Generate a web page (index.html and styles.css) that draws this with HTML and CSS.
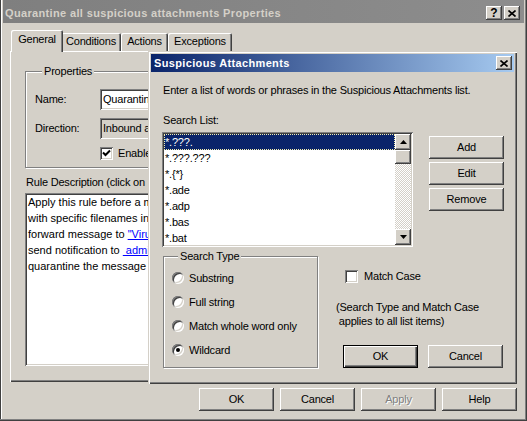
FILE: index.html
```html
<!DOCTYPE html>
<html lang="en">
<head>
    <meta charset="UTF-8">
    <title>Quarantine all suspicious attachments Properties</title>
    <link rel="stylesheet" href="styles.css">
</head>
<body>
<div class="window">
    <div class="titlebar inactive">
        <span class="title">Quarantine all suspicious attachments Properties</span>
        <div class="caption-btns">
            <span class="cbtn help">?</span>
            <span class="cbtn"><svg width="8" height="7" viewBox="0 0 8 7"><path d="M0.5 0.5L7.5 6.5M7.5 0.5L0.5 6.5" stroke="#000" stroke-width="1.6"/></svg></span>
        </div>
    </div>

    <div class="sheet">
        <div class="tabs">
            <span class="tab active w-general">General</span>
            <span class="tab w-conditions">Conditions</span>
            <span class="tab w-actions">Actions</span>
            <span class="tab w-exceptions">Exceptions</span>
        </div>
        <div class="panel">
            <!-- the part of the page not covered by the dialog -->
            <div class="clip">
                <fieldset class="group props">
                    <legend>Properties</legend>
                    <div class="form">
                        <span>Name:</span>
                        <div class="field">Quarantine</div>
                        <span>Direction:</span>
                        <div class="field disabled">Inbound and</div>
                        <span></span>
                        <label class="check-row"><span class="checkbox checked"><svg width="9" height="9" viewBox="0 0 9 9"><path d="M1 3.5L3.5 6L8 1.5" fill="none" stroke="#000" stroke-width="2"/></svg></span>Enabled</label>
                    </div>
                </fieldset>
                <div class="desc-label">Rule Description (click on</div>
                <div class="desc">
                    <div>Apply this rule before a message</div>
                    <div>with specific filenames in</div>
                    <div>forward message to <a href="#">"Virus</a></div>
                    <div>send notification to <a href="#">&nbsp;admin</a></div>
                    <div>quarantine the message</div>
                </div>
            </div>
        </div>
    </div>

    <div class="actions">
        <span class="btn">OK</span>
        <span class="btn">Cancel</span>
        <span class="btn disabled">Apply</span>
        <span class="btn">Help</span>
    </div>

    <div class="dialog">
        <div class="titlebar active">
            <span class="title">Suspicious Attachments</span>
            <span class="cbtn"><svg width="8" height="7" viewBox="0 0 8 7"><path d="M0.5 0.5L7.5 6.5M7.5 0.5L0.5 6.5" stroke="#000" stroke-width="1.6"/></svg></span>
        </div>
        <div class="dlg-body">
            <p class="intro">Enter a list of words or phrases in the Suspicious Attachments list.</p>
            <div class="list-label">Search List:</div>
            <div class="list-row">
                <div class="listbox">
                    <div class="items">
                        <div class="item sel">*.???.</div>
                        <div class="item">*.???.???</div>
                        <div class="item">*.{*}</div>
                        <div class="item">*.ade</div>
                        <div class="item">*.adp</div>
                        <div class="item">*.bas</div>
                        <div class="item">*.bat</div>
                    </div>
                    <div class="vscroll">
                        <span class="sbtn"><svg width="7" height="4" viewBox="0 0 7 4"><path d="M3.5 0L7 4H0z"/></svg></span>
                        <span class="thumb"></span>
                        <span class="track"></span>
                        <span class="sbtn"><svg width="7" height="4" viewBox="0 0 7 4"><path d="M0 0H7L3.5 4z"/></svg></span>
                    </div>
                </div>
                <div class="side-btns">
                    <span class="btn">Add</span>
                    <span class="btn">Edit</span>
                    <span class="btn">Remove</span>
                </div>
            </div>
            <div class="lower">
                <fieldset class="group search-type">
                    <legend>Search Type</legend>
                    <div class="radio-row"><span class="radio"></span>Substring</div>
                    <div class="radio-row"><span class="radio"></span>Full string</div>
                    <div class="radio-row"><span class="radio"></span>Match whole word only</div>
                    <div class="radio-row"><span class="radio on"></span>Wildcard</div>
                </fieldset>
                <div class="lower-right">
                    <label class="check-row match"><span class="checkbox"></span>Match Case</label>
                    <div class="note">(Search Type and Match Case
 applies to all list items)</div>
                    <div class="dlg-actions">
                        <span class="btn default">OK</span>
                        <span class="btn">Cancel</span>
                    </div>
                </div>
            </div>
        </div>
    </div>
</div>
</body>
</html>
```

FILE: styles.css
```css
*{
    box-sizing: border-box;
}
body{
    margin: 0;
    background: #d4d0c8;
    font: 11px/13px "Liberation Sans", Arial, sans-serif;
    letter-spacing: -0.2px;
    color: #000;
}
.window{
    position: relative;
    width: 527px;
    height: 421px;
    padding: 0 3px 3px;
    overflow: hidden;
    background: #d4d0c8;
    box-shadow: inset -1px -1px #404040, inset -2px -2px #808080, inset 1px 0 #404040, inset 2px 0 #fff;
}

/* caption bars */
.titlebar{
    display: flex;
    align-items: center;
    font-weight: bold;
    letter-spacing: 0.35px;
    white-space: nowrap;
}
.titlebar .title{
    flex: 1;
    overflow: hidden;
}
.titlebar.inactive{
    height: 23px;
    padding: 3px 4px 0 2px;
    background: linear-gradient(to right, #7f7f7f, #8d8d8d);
    color: #d4d0c8;
}
.titlebar.active{
    height: 18px;
    padding: 0 2px 0 3px;
    background: linear-gradient(to right, #0a246a, #a6caf0);
    color: #fff;
}
.caption-btns{
    display: flex;
    gap: 2px;
}
.cbtn{
    display: flex;
    align-items: center;
    justify-content: center;
    width: 16px;
    height: 14px;
    background: #d4d0c8;
    color: #000;
    font-size: 12px;
    letter-spacing: 0;
    box-shadow: inset -1px -1px #404040, inset 1px 1px #fff, inset -2px -2px #808080;
}
.cbtn.help{
    padding-top: 1px;
}

/* property sheet */
.sheet{
    margin: 7px 7px 0;
}
.tabs{
    position: relative;
    z-index: 1;
    display: flex;
    align-items: flex-end;
    height: 21px;
    padding-left: 3px;
}
.tab{
    height: 18px;
    padding-top: 2px;
    text-align: center;
    background: #d4d0c8;
    border-radius: 2px 2px 0 0;
    box-shadow: inset 1px 1px #fff, inset -1px 0 #404040, inset -2px 0 #808080;
}
.tab.active{
    position: relative;
    z-index: 2;
    height: 22px;
    margin: 0 -2px -1px;
    padding-top: 3px;
}
.w-general{ width: 48px; }
.tab.active.w-general{ width: 52px; }
.w-conditions{ width: 60px; }
.w-actions{ width: 47px; }
.w-exceptions{ width: 64px; }

.panel{
    height: 331px;
    padding: 14px 0 0 15px;
    box-shadow: inset 1px 1px #fff, inset -1px -1px #404040, inset -2px -2px #808080;
}
.clip{
    width: 124px;
    overflow: hidden;
}

/* etched group boxes */
.group{
    margin: 0;
    min-width: 0;
    border: 1px solid #808080;
    box-shadow: inset 1px 1px #fff, 1px 1px #fff;
}
.group legend{
    margin-left: 6px;
    padding: 0 2px;
    line-height: 13px;
    background: #d4d0c8;
}
.props{
    width: 460px;
    padding: 11px 0 7px 9px;
}
.props legend{
    margin-left: 7px;
}
.form{
    display: grid;
    grid-template-columns: 65px 1fr;
    row-gap: 8px;
    align-items: center;
}
.field{
    height: 21px;
    padding: 4px 3px 0;
    background: #fff;
    white-space: nowrap;
    overflow: hidden;
    box-shadow: inset 1px 1px #808080, inset -1px -1px #fff, inset 2px 2px #404040, inset -2px -2px #d4d0c8;
}
.field.disabled{
    background: #d4d0c8;
}
.check-row{
    display: flex;
    align-items: center;
    height: 13px;
    white-space: nowrap;
}
.checkbox{
    display: flex;
    align-items: center;
    justify-content: center;
    width: 13px;
    height: 13px;
    margin-right: 5px;
    background: #fff;
    box-shadow: inset 1px 1px #808080, inset -1px -1px #fff, inset 2px 2px #404040, inset -2px -2px #d4d0c8;
}
.desc-label{
    margin-top: 8px;
    padding-left: 1px;
    white-space: nowrap;
}
.desc{
    width: 460px;
    height: 173px;
    margin-top: 4px;
    padding: 1px 0 0 3px;
    line-height: 16px;
    letter-spacing: 0;
    white-space: nowrap;
    background: #fff;
    box-shadow: inset 1px 1px #808080, inset -1px -1px #fff, inset 2px 2px #404040, inset -2px -2px #d4d0c8;
}
.desc a{
    color: #0000ff;
}

/* push buttons */
.btn{
    display: flex;
    align-items: center;
    justify-content: center;
    width: 75px;
    height: 23px;
    background: #d4d0c8;
    box-shadow: inset -1px -1px #404040, inset 1px 1px #fff, inset -2px -2px #808080;
}
.btn.disabled{
    color: #808080;
    text-shadow: 1px 1px #fff;
}
.btn.default{
    box-shadow: inset 0 0 0 1px #000, inset 2px 2px #fff, inset -2px -2px #404040, inset -3px -3px #808080;
}
.actions{
    display: flex;
    justify-content: flex-end;
    gap: 6px;
    margin-top: 6px;
    padding-right: 7px;
}

/* modal dialog sits over the sheet */
.dialog{
    position: absolute;
    left: 148px;
    top: 51px;
    z-index: 5;
    width: 369px;
    height: 333px;
    padding: 3px;
    background: #d4d0c8;
    box-shadow: inset 1px 1px #d4d0c8, inset 2px 2px #fff, inset -1px -1px #404040, inset -2px -2px #808080;
}
.dlg-body{
    padding-left: 12px;
}
.intro{
    margin: 12px 0 0;
    white-space: nowrap;
}
.list-label{
    margin-top: 17px;
}
.list-row{
    display: flex;
    margin-top: 5px;
}
.listbox{
    display: flex;
    width: 251px;
    height: 115px;
    margin-left: -1px;
    padding: 2px;
    background: #fff;
    box-shadow: inset 1px 1px #808080, inset -1px -1px #fff, inset 2px 2px #404040, inset -2px -2px #d4d0c8;
}
.items{
    flex: 1;
}
.item{
    height: 16px;
    padding-left: 1px;
    line-height: 16px;
    white-space: nowrap;
}
.item.sel{
    background: #0a246a;
    color: #fff;
    outline: 1px dotted #f4f0b0;
    outline-offset: -1px;
}
.vscroll{
    display: flex;
    flex-direction: column;
    width: 16px;
    background: repeating-conic-gradient(#fff 0 25%, #d4d0c8 0 50%) 0 0/2px 2px;
}
.sbtn, .thumb{
    display: flex;
    align-items: center;
    justify-content: center;
    height: 16px;
    background: #d4d0c8;
    box-shadow: inset -1px -1px #404040, inset 1px 1px #fff, inset -2px -2px #808080;
}
.thumb{
    height: 14px;
}
.track{
    flex: 1;
}
.side-btns{
    display: flex;
    flex-direction: column;
    gap: 3px;
    margin: 4px 0 0 16px;
}
.lower{
    display: flex;
    margin-top: 3px;
}
.search-type{
    width: 155px;
    padding: 3px 0 4px 8px;
}
.radio-row{
    display: flex;
    align-items: center;
    height: 24px;
    white-space: nowrap;
}
.radio{
    position: relative;
    width: 12px;
    height: 12px;
    margin-right: 5px;
    border-radius: 50%;
    background: #fff;
    box-shadow: inset 1px 1px #808080, inset -1px -1px #fff, inset 2px 2px #404040, inset -2px -2px #d4d0c8;
}
.radio.on::after{
    content: "";
    position: absolute;
    left: 4px;
    top: 4px;
    width: 4px;
    height: 4px;
    border-radius: 50%;
    background: #000;
}
.lower-right{
    margin-left: 18px;
}
.match{
    margin: 20px 0 0 9px;
}
.match .checkbox{
    margin-right: 6px;
}
.note{
    margin-top: 17px;
    line-height: 14px;
    white-space: pre;
}
.dlg-actions{
    display: flex;
    gap: 10px;
    margin: 17px 0 0 7px;
}
```
